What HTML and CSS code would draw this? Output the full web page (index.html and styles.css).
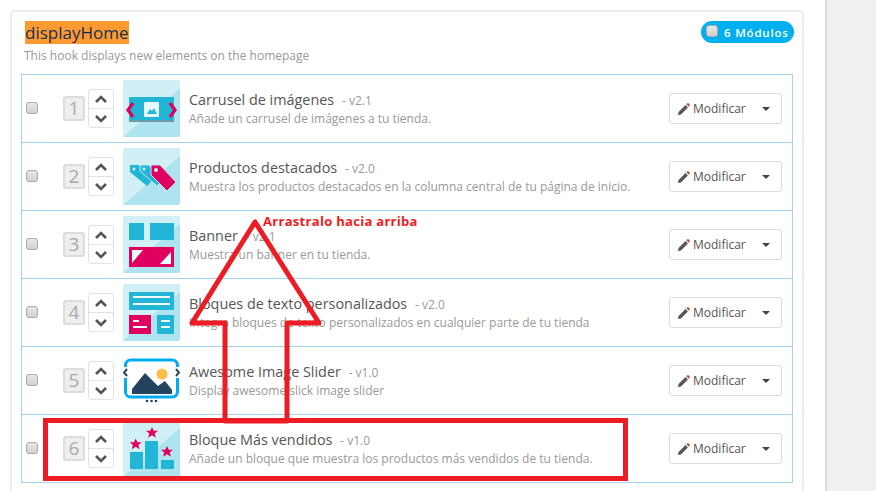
FILE: index.html
```html
<!DOCTYPE html>
<html lang="es">
<head>
    <meta charset="UTF-8">
    <title>displayHome</title>
    <link rel="stylesheet" href="styles.css">
</head>
<body>
    <div class="page">
        <main class="content">
            <section class="panel">
                <header class="hook-head">
                    <div>
                        <h2 class="hook-name"><mark>displayHome</mark></h2>
                        <p class="hook-desc">This hook displays new elements on the homepage</p>
                    </div>
                    <span class="badge"><input type="checkbox" class="check check-badge">6 Módulos</span>
                </header>

                <ul class="module-list">
                    <li class="module">
                        <input type="checkbox" class="check">
                        <span class="pos">1</span>
                        <span class="arrows">
                            <span class="arrow"><svg viewBox="0 0 14 9"><path d="M2 7l5-5 5 5"/></svg></span>
                            <span class="arrow"><svg viewBox="0 0 14 9"><path d="M2 2l5 5 5-5"/></svg></span>
                        </span>
                        <svg class="thumb" viewBox="0 0 57 57">
                            <rect width="57" height="57" rx="2" fill="#d0f0f6"/>
                            <path d="M0 57L57 8v47a2 2 0 0 1-2 2z" fill="#aee4ef"/>
                            <rect x="6" y="17" width="45" height="25" fill="#23b5d6"/>
                            <rect x="6" y="40" width="45" height="2" fill="#6c9aa8"/>
                            <rect x="21" y="22" width="15" height="15" rx="1" fill="#e8f8fb"/>
                            <path d="M24 34l3-5 2 2 2-3 3 6z" fill="#23b5d6"/>
                            <path d="M10 23l-5 7 5 7M47 23l5 7-5 7" class="thumb-chevron"/>
                        </svg>
                        <div class="info">
                            <div class="title">Carrusel de imágenes <small>- v2.1</small></div>
                            <p class="desc">Añade un carrusel de imágenes a tu tienda.</p>
                        </div>
                        <div class="edit"><svg class="pencil" viewBox="0 0 12 12"><path d="M0 12l.6-3L7.5 2.1l2.4 2.4L3 11.4z" fill="#555"/><path d="M8.3 1.3L9.4.2a.7.7 0 0 1 1 0l1.4 1.4a.7.7 0 0 1 0 1l-1.1 1.1z" fill="#a5604f"/></svg>Modificar<i class="caret"></i></div>
                    </li>

                    <li class="module">
                        <input type="checkbox" class="check">
                        <span class="pos">2</span>
                        <span class="arrows">
                            <span class="arrow"><svg viewBox="0 0 14 9"><path d="M2 7l5-5 5 5"/></svg></span>
                            <span class="arrow"><svg viewBox="0 0 14 9"><path d="M2 2l5 5 5-5"/></svg></span>
                        </span>
                        <svg class="thumb" viewBox="0 0 57 57">
                            <rect width="57" height="57" rx="2" fill="#d0f0f6"/>
                            <path d="M0 57L57 8v47a2 2 0 0 1-2 2z" fill="#aee4ef"/>
                            <path d="M7 17h9l14 15-6 6L7 24z" fill="#23b5d6"/>
                            <path d="M17 17h9l14 15-6 6-17-15z" fill="#23b5d6" stroke="#c4ebf3"/>
                            <path d="M28 17h9l16 17-9 9-16-16z" fill="#e0005f" stroke="#c4ebf3"/>
                            <circle cx="33" cy="22" r="2" fill="#d0f0f6"/>
                            <circle cx="11" cy="21" r="1.500" fill="#d0f0f6"/>
                            <circle cx="21" cy="21" r="1.500" fill="#d0f0f6"/>
                        </svg>
                        <div class="info">
                            <div class="title">Productos destacados <small>- v2.0</small></div>
                            <p class="desc">Muestra los productos destacados en la columna central de tu página de inicio.</p>
                        </div>
                        <div class="edit"><svg class="pencil" viewBox="0 0 12 12"><path d="M0 12l.6-3L7.5 2.1l2.4 2.4L3 11.4z" fill="#555"/><path d="M8.3 1.3L9.4.2a.7.7 0 0 1 1 0l1.4 1.4a.7.7 0 0 1 0 1l-1.1 1.1z" fill="#a5604f"/></svg>Modificar<i class="caret"></i></div>
                    </li>

                    <li class="module">
                        <input type="checkbox" class="check">
                        <span class="pos">3</span>
                        <span class="arrows">
                            <span class="arrow"><svg viewBox="0 0 14 9"><path d="M2 7l5-5 5 5"/></svg></span>
                            <span class="arrow"><svg viewBox="0 0 14 9"><path d="M2 2l5 5 5-5"/></svg></span>
                        </span>
                        <svg class="thumb" viewBox="0 0 57 57">
                            <rect width="57" height="57" rx="2" fill="#d0f0f6"/>
                            <path d="M0 57L57 8v47a2 2 0 0 1-2 2z" fill="#aee4ef"/>
                            <rect x="6" y="7" width="15" height="17" fill="#23b5d6"/>
                            <rect x="27" y="7" width="24" height="17" fill="#23b5d6"/>
                            <rect x="6" y="31" width="45" height="20" fill="#e0005f"/>
                            <path d="M9 34h11L9 47zM48 48H37l11-12z" fill="#eefafc"/>
                        </svg>
                        <div class="info">
                            <div class="title">Banner <small>- v2.1</small></div>
                            <p class="desc">Muestra un banner en tu tienda.</p>
                        </div>
                        <div class="edit"><svg class="pencil" viewBox="0 0 12 12"><path d="M0 12l.6-3L7.5 2.1l2.4 2.4L3 11.4z" fill="#555"/><path d="M8.3 1.3L9.4.2a.7.7 0 0 1 1 0l1.4 1.4a.7.7 0 0 1 0 1l-1.1 1.1z" fill="#a5604f"/></svg>Modificar<i class="caret"></i></div>
                    </li>

                    <li class="module">
                        <input type="checkbox" class="check">
                        <span class="pos">4</span>
                        <span class="arrows">
                            <span class="arrow"><svg viewBox="0 0 14 9"><path d="M2 7l5-5 5 5"/></svg></span>
                            <span class="arrow"><svg viewBox="0 0 14 9"><path d="M2 2l5 5 5-5"/></svg></span>
                        </span>
                        <svg class="thumb" viewBox="0 0 57 57">
                            <rect width="57" height="57" rx="2" fill="#d0f0f6"/>
                            <path d="M0 57L57 8v47a2 2 0 0 1-2 2z" fill="#aee4ef"/>
                            <rect x="6" y="8" width="45" height="18" fill="#23b5d6"/>
                            <path d="M10 13h37M10 20h37" stroke="#eefafc" stroke-width="2"/>
                            <rect x="6" y="31" width="22" height="19" fill="#e0005f"/>
                            <path d="M10 37h6M10 43h14" stroke="#eefafc" stroke-width="2"/>
                            <rect x="34" y="31" width="17" height="19" fill="#23b5d6"/>
                            <path d="M38 37h9M38 43h9" stroke="#eefafc" stroke-width="2"/>
                        </svg>
                        <div class="info">
                            <div class="title">Bloques de texto personalizados <small>- v2.0</small></div>
                            <p class="desc">Integra bloques de texto personalizados en cualquier parte de tu tienda</p>
                        </div>
                        <div class="edit"><svg class="pencil" viewBox="0 0 12 12"><path d="M0 12l.6-3L7.5 2.1l2.4 2.4L3 11.4z" fill="#555"/><path d="M8.3 1.3L9.4.2a.7.7 0 0 1 1 0l1.4 1.4a.7.7 0 0 1 0 1l-1.1 1.1z" fill="#a5604f"/></svg>Modificar<i class="caret"></i></div>
                    </li>

                    <li class="module">
                        <input type="checkbox" class="check">
                        <span class="pos">5</span>
                        <span class="arrows">
                            <span class="arrow"><svg viewBox="0 0 14 9"><path d="M2 7l5-5 5 5"/></svg></span>
                            <span class="arrow"><svg viewBox="0 0 14 9"><path d="M2 2l5 5 5-5"/></svg></span>
                        </span>
                        <svg class="thumb" viewBox="0 0 57 57">
                            <path d="M2.500 15V13a5 5 0 0 1 5-5h42a5 5 0 0 1 5 5v2M54.500 26v14a5 5 0 0 1-5 5H7.500a5 5 0 0 1-5-5V26" fill="none" stroke="#00aeef" stroke-width="3"/>
                            <path d="M4 17l-3 3.500 3 3.500M53 17l3 3.500-3 3.500" fill="none" stroke="#24435f" stroke-width="2"/>
                            <path d="M9 42v-5l13-16 11 11 2 2 7-5 7 9v4z" fill="#24435f"/>
                            <circle cx="39" cy="22" r="5.500" fill="#fcbd49"/>
                            <circle cx="24" cy="49" r="1.300" fill="#24435f"/>
                            <circle cx="28.500" cy="49" r="1.300" fill="#24435f"/>
                            <circle cx="33" cy="49" r="1.300" fill="#24435f"/>
                        </svg>
                        <div class="info">
                            <div class="title">Awesome Image Slider <small>- v1.0</small></div>
                            <p class="desc">Display awesome slick image slider</p>
                        </div>
                        <div class="edit"><svg class="pencil" viewBox="0 0 12 12"><path d="M0 12l.6-3L7.5 2.1l2.4 2.4L3 11.4z" fill="#555"/><path d="M8.3 1.3L9.4.2a.7.7 0 0 1 1 0l1.4 1.4a.7.7 0 0 1 0 1l-1.1 1.1z" fill="#a5604f"/></svg>Modificar<i class="caret"></i></div>
                    </li>

                    <li class="module">
                        <input type="checkbox" class="check">
                        <span class="pos">6</span>
                        <span class="arrows">
                            <span class="arrow"><svg viewBox="0 0 14 9"><path d="M2 7l5-5 5 5"/></svg></span>
                            <span class="arrow"><svg viewBox="0 0 14 9"><path d="M2 2l5 5 5-5"/></svg></span>
                        </span>
                        <svg class="thumb" viewBox="0 0 57 57">
                            <rect width="57" height="57" rx="2" fill="#d0f0f6"/>
                            <path d="M0 57L57 8v47a2 2 0 0 1-2 2z" fill="#aee4ef"/>
                            <rect x="7" y="32" width="13" height="17" fill="#23b5d6"/>
                            <rect x="22" y="21" width="13" height="28" fill="#23b5d6"/>
                            <rect x="38" y="40" width="13" height="9" fill="#23b5d6"/>
                            <path d="M12.700 18.500l1.800 3.800h4.200l-3.300 2.700 1.200 4.200-3.900-2.400-3.900 2.400 1.200-4.200-3.300-2.700h4.200zM29 7l1.800 3.800h4.200l-3.300 2.700 1.200 4.200-3.900-2.400-3.900 2.400 1.200-4.200-3.300-2.700h4.200zM44 26l1.800 3.800h4.200l-3.300 2.700 1.200 4.200-3.900-2.400-3.900 2.400 1.200-4.200-3.300-2.700h4.200z" fill="#e0005f"/>
                        </svg>
                        <div class="info">
                            <div class="title">Bloque Más vendidos <small>- v1.0</small></div>
                            <p class="desc">Añade un bloque que muestra los productos más vendidos de tu tienda.</p>
                        </div>
                        <div class="edit"><svg class="pencil" viewBox="0 0 12 12"><path d="M0 12l.6-3L7.5 2.1l2.4 2.4L3 11.4z" fill="#555"/><path d="M8.3 1.3L9.4.2a.7.7 0 0 1 1 0l1.4 1.4a.7.7 0 0 1 0 1l-1.1 1.1z" fill="#a5604f"/></svg>Modificar<i class="caret"></i></div>
                    </li>
                </ul>
            </section>
        </main>
        <aside class="sidebar"></aside>
    </div>

    <!-- anotaciones encima de la captura -->
    <svg class="markup" viewBox="0 0 876 491">
        <path d="M255 222L192 323H225V421H287V323H319z"/>
        <rect x="45.500" y="420.500" width="580" height="58"/>
    </svg>
    <span class="markup-label">Arrastralo hacia arriba</span>
</body>
</html>
```

FILE: styles.css
```css
/* base */
html, body {
    margin: 0;
    height: 100%;
    overflow: hidden;
}

body {
    font-family: "Open Sans", "Liberation Sans", sans-serif;
    background-color: white;
    color: #555;
}

.page {
    display: flex;
    height: 491px;
}

.content {
    width: 825px;
    flex: none;
    padding: 10px 21px 0 10px;
    box-sizing: border-box;
}

.sidebar {
    flex: 1;
    background-color: #eff1f2;
    border-left: 2px solid #d9dbdd;
}

/* panel */
.panel {
    border: 2px solid #ececec;
    border-bottom: none;
    border-radius: 5px 5px 0 0;
    padding: 9px 9px 0;
    height: 481px;
    box-sizing: border-box;
}

.hook-head {
    display: flex;
    justify-content: space-between;
    align-items: flex-start;
    height: 53px;
    padding-left: 4px;
}

.hook-name {
    margin: 0;
    font-size: 17px;
    font-weight: normal;
    line-height: 23px;
}

.hook-name mark {
    display: inline-block;
    background-color: #ff9a33;
    color: #14304d;
}

.hook-desc {
    margin: 3px 0 0 -1px;
    font-size: 12px;
    line-height: 18px;
    color: #999;
}

.badge {
    display: flex;
    align-items: center;
    box-sizing: border-box;
    width: 93px;
    height: 22px;
    margin-right: -1px;
    padding: 0 5px;
    border-radius: 11px;
    background-color: #00aff0;
    color: white;
    font-size: 11.5px;
    font-weight: 600;
    letter-spacing: 0.8px;
    white-space: nowrap;
}

/* lista de modulos */
.module-list {
    list-style: none;
    margin: 0;
    padding: 0;
    border: 1px solid #a3d4ec;
    border-bottom: none;
}

.module {
    display: flex;
    align-items: center;
    height: 67px;
    border-bottom: 1px solid #a3d4ec;
    padding-left: 4px;
    padding-right: 10px;
}

.check {
    appearance: none;
    flex: none;
    width: 12px;
    height: 12px;
    margin: -1px 0 0;
    border: 1px solid #aaa;
    border-radius: 3px;
    background: linear-gradient(#e8e8e8, #d0d0d0);
}

.check-badge {
    margin-right: 6px;
    margin-top: -3px;
}

.pos {
    flex: none;
    box-sizing: border-box;
    width: 22px;
    height: 25px;
    margin-left: 25px;
    border: 2px solid #dcdcdc;
    border-radius: 3px;
    background-color: #eee;
    color: #aaa;
    font-size: 19px;
    line-height: 21px;
    text-align: center;
}

.arrows {
    flex: none;
    display: flex;
    flex-direction: column;
    box-sizing: border-box;
    width: 26px;
    height: 39px;
    margin-left: 3px;
    border: 1px solid #e2e2e2;
    border-radius: 3px;
}

.arrow {
    flex: 1;
    display: flex;
    align-items: center;
    justify-content: center;
}

.arrow + .arrow {
    border-top: 1px solid #e2e2e2;
}

.arrow svg {
    width: 14px;
    height: 9px;
    fill: none;
    stroke: #555;
    stroke-width: 2.600;
}

.thumb {
    flex: none;
    width: 57px;
    height: 57px;
    margin-left: 9px;
}

.thumb-chevron {
    fill: none;
    stroke: #e0005f;
    stroke-width: 3.200;
}

.info {
    flex: 1;
    margin-left: 9px;
    min-width: 0;
}

.title {
    font-size: 14.4px;
    line-height: 20px;
    color: #555;
}

.title small {
    margin-left: 4px;
    font-size: 12px;
    color: #999;
}

.desc {
    margin: -1px 0 0;
    font-size: 12px;
    line-height: 17px;
    color: #999;
}

.edit {
    flex: none;
    display: flex;
    align-items: center;
    box-sizing: border-box;
    width: 113px;
    height: 31px;
    padding-left: 8px;
    border: 1px solid #dcdcdc;
    border-radius: 3px;
    background-color: white;
    font-size: 12px;
    color: #555;
}

.pencil {
    width: 12px;
    height: 12px;
    margin-right: 3px;
}

.caret {
    margin-left: 16px;
    border-top: 4px solid #444;
    border-left: 4px solid transparent;
    border-right: 4px solid transparent;
}

/* flecha y recuadro rojos */
.markup {
    position: absolute;
    left: 0;
    top: 0;
    width: 876px;
    height: 491px;
    fill: none;
    stroke: #ed1c24;
    stroke-width: 5;
    stroke-linejoin: round;
    pointer-events: none;
}

.markup rect {
    stroke-linejoin: miter;
}

.markup-label {
    position: absolute;
    left: 263px;
    top: 212px;
    font-family: "Open Sans", sans-serif;
    font-size: 13px;
    font-weight: 700;
    letter-spacing: 0.3px;
    color: #ed1c24;
    white-space: nowrap;
}
```
